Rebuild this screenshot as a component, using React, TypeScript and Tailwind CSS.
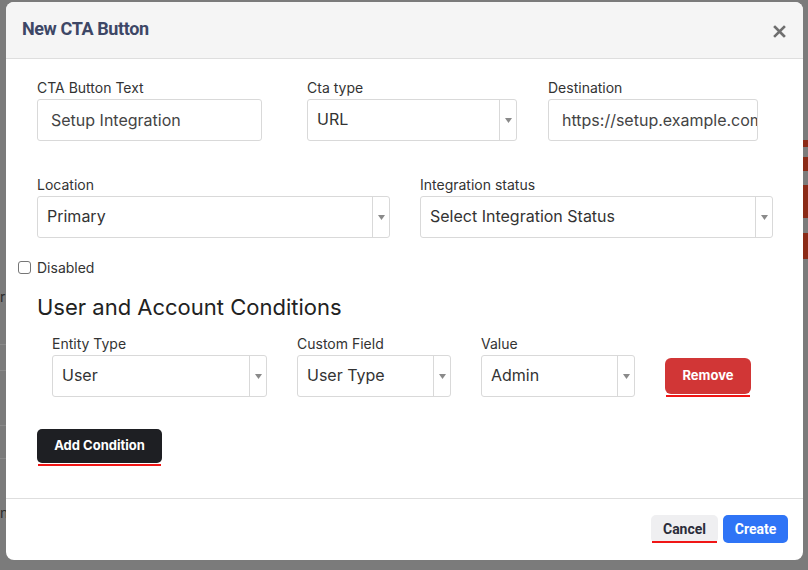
import React from "react";

const font = { fontFamily: "Inter, 'Noto Sans', sans-serif" };

function Arrow() {
  return (
    <svg width="7" height="5" viewBox="0 0 7 5">
      <path d="M0 0 L7 0 L3.5 5 Z" fill="#8a8a8a" />
    </svg>
  );
}

function Select({ value, w }: { value: string; w: string }) {
  return (
    <div className={`${w} h-[42px] border border-[#d9d9d9] rounded-[3px] flex bg-white`}>
      <div className="flex-1 flex items-center pl-[9px] pb-[3px] text-[16px] text-[#333] overflow-hidden whitespace-nowrap">
        {value}
      </div>
      <div className="w-[17px] border-l border-[#d9d9d9] flex items-center justify-center">
        <Arrow />
      </div>
    </div>
  );
}

function Input({ value, w }: { value: string; w: string }) {
  return (
    <div className={`${w} h-[42px] border border-[#d9d9d9] rounded-[3px] flex items-center pl-[13px] text-[16px] text-[#444] overflow-hidden whitespace-nowrap bg-white`}>
      {value}
    </div>
  );
}

function Label({ children }: { children: React.ReactNode }) {
  return <div className="text-[14px] leading-[20px] text-[#333] mb-px">{children}</div>;
}

export default function App() {
  return (
    <div className="relative w-[808px] h-[570px] bg-[#7b7b7b] overflow-hidden" style={font}>
      {/* background page hints */}
      <div className="absolute left-0 top-[286px] text-[14px] text-[#2a2a2a]">r</div>
      <div className="absolute left-0 top-[344px] w-[6px] h-px bg-[#8a8a8a]" />
      <div className="absolute left-0 top-[370px] w-[6px] h-px bg-[#8a8a8a]" />
      <div className="absolute left-0 top-[425px] w-[6px] h-px bg-[#8a8a8a]" />
      <div className="absolute left-0 top-[458px] w-[6px] h-px bg-[#8a8a8a]" />
      <div className="absolute left-0 top-[502px] text-[14px] text-[#2a2a2a]">n</div>
      <div className="absolute left-[803px] top-[140px] w-[6px] h-[7px] bg-[#8b2a17]" />
      <div className="absolute left-[803px] top-[157px] w-[6px] h-[14px] bg-[#8b2a17]" />
      <div className="absolute left-[803px] top-[185px] w-[6px] h-[33px] bg-[#8b2a17]" />
      <div className="absolute left-[803px] top-[233px] w-[6px] h-[26px] bg-[#8b2a17]" />

      {/* modal */}
      <div className="absolute left-[6px] top-[2px] w-[797px] h-[558px] bg-white rounded-[8px] flex flex-col overflow-hidden">
        <div className="h-[57px] bg-[#f5f5f5] border-b border-[#dedede] flex items-center justify-between pl-[16px] pr-[17px] shrink-0">
          <div
            className="text-[18px] font-bold text-[#3d4766] tracking-[-0.4px] pb-[3px]"
            style={{ fontFamily: "Roboto, 'Liberation Sans', sans-serif" }}
          >
            New CTA Button
          </div>
          <svg width="13" height="13" viewBox="0 0 13 13" className="mt-[2px]">
            <path d="M2 2 L11 11 M11 2 L2 11" stroke="#6f6f6f" strokeWidth="2.6" strokeLinecap="square" />
          </svg>
        </div>

        <div className="flex-1 pl-[31px] pt-[19px]">
          <div className="flex">
            <div className="w-[225px]">
              <Label>CTA Button Text</Label>
              <Input value="Setup Integration" w="w-[225px]" />
            </div>
            <div className="w-[210px] ml-[45px]">
              <Label>Cta type</Label>
              <Select value="URL" w="w-[210px]" />
            </div>
            <div className="w-[210px] ml-[31px]">
              <Label>Destination</Label>
              <Input value="https://setup.example.com" w="w-[210px]" />
            </div>
          </div>

          <div className="flex gap-[30px] mt-[34px]">
            <div className="w-[353px]">
              <Label>Location</Label>
              <Select value="Primary" w="w-[353px]" />
            </div>
            <div className="w-[353px]">
              <Label>Integration status</Label>
              <Select value="Select Integration Status" w="w-[353px]" />
            </div>
          </div>

          <div className="flex items-center mt-[19px] -ml-[19px] h-[20px]">
            <div className="w-[13px] h-[13px] border border-[#767676] rounded-[3px] bg-white" />
            <span className="ml-[6px] text-[14px] text-[#333]">Disabled</span>
          </div>

          <div className="mt-[14px] text-[22px] leading-[32px] text-[#222]">User and Account Conditions</div>

          <div className="flex items-start ml-[15px] mt-[11px]">
            <div className="w-[215px]">
              <Label>Entity Type</Label>
              <Select value="User" w="w-[215px]" />
            </div>
            <div className="w-[154px] ml-[30px]">
              <Label>Custom Field</Label>
              <Select value="User Type" w="w-[154px]" />
            </div>
            <div className="w-[154px] ml-[30px]">
              <Label>Value</Label>
              <Select value="Admin" w="w-[154px]" />
            </div>
            <div className="ml-[30px] mt-[24px] flex flex-col">
              <div className="w-[86px] h-[36px] bg-[#d13636] rounded-[6px] flex items-center justify-center text-white text-[13px] font-bold">
                Remove
              </div>
              <div className="mt-px mx-px h-[2px] bg-[#f01616]" />
            </div>
          </div>

          <div className="mt-[32px] inline-flex flex-col">
            <div className="w-[125px] h-[34px] bg-[#1e1f23] rounded-[5px] flex items-center justify-center text-white text-[13px] font-bold">
              Add Condition
            </div>
            <div className="mt-px mx-px h-[2px] bg-[#f01616]" />
          </div>
        </div>

        <div className="h-[62px] border-t border-[#dedede] flex items-start justify-end pr-[15px] pt-[16px] shrink-0">
          <div className="flex flex-col">
            <div
              className="w-[67px] h-[28px] bg-[#efeff1] rounded-[5px] flex items-center justify-center text-[14px] font-bold text-[#2b2d3a]"
              style={{ fontFamily: "Roboto, 'Liberation Sans', sans-serif" }}
            >
              Cancel
            </div>
            <div className="-mt-[2px] mx-px h-[2px] bg-[#f01616]" />
          </div>
          <div
            className="ml-[5px] w-[65px] h-[28px] bg-[#2f74f6] rounded-[5px] flex items-center justify-center text-[14px] font-bold text-white"
            style={{ fontFamily: "Roboto, 'Liberation Sans', sans-serif" }}
          >
            Create
          </div>
        </div>
      </div>
    </div>
  );
}
